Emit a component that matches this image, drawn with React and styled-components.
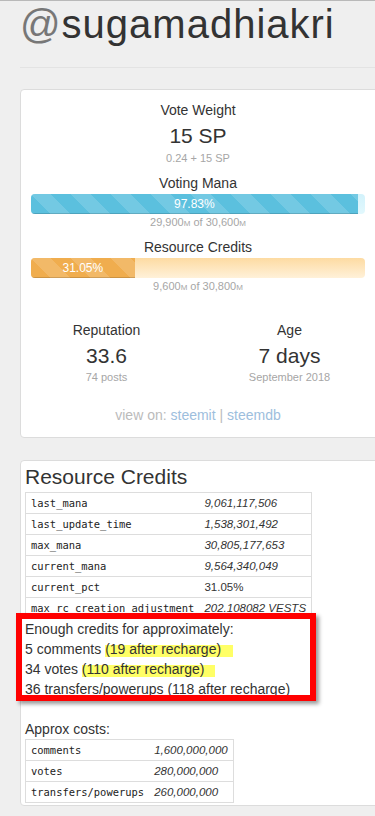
import React from 'react';
import styled, { createGlobalStyle } from 'styled-components';

const GlobalStyle = createGlobalStyle`
  html, body {
    margin: 0;
    padding: 0;
  }
  body {
    background: #efefef;
    font-family: 'Liberation Sans', Arial, sans-serif;
    font-size: 14px;
    color: #333;
    overflow: hidden;
  }
`;

const rcRows = [
  { key: 'last_mana', value: '9,061,117,506', italic: true },
  { key: 'last_update_time', value: '1,538,301,492', italic: true },
  { key: 'max_mana', value: '30,805,177,653', italic: true },
  { key: 'current_mana', value: '9,564,340,049', italic: true },
  { key: 'current_pct', value: '31.05%', italic: false },
  { key: 'max_rc_creation_adjustment', value: '202.108082 VESTS', italic: true },
];

const costRows = [
  { key: 'comments', value: '1,600,000,000', italic: true },
  { key: 'votes', value: '280,000,000', italic: true },
  { key: 'transfers/powerups', value: '260,000,000', italic: true },
];

const App = () => {
  return (
    <>
      <GlobalStyle />
      <Page>
        <Header>
          <Title><At>@</At>sugamadhiakri</Title>
        </Header>

        <Card $pad="10px 14px 12px 10px">
          <Label>Vote Weight</Label>
          <Value>15 SP</Value>
          <Sub $gap={2}>0.24 + 15 SP</Sub>

          <Group $gap={7}>
            <Label>Voting Mana</Label>
            <Track $track="linear-gradient(to bottom, #d2f2fb, #e2f8fd)">
              <Fill $color="#5bc0de" style={{ width: '97.83%' }}>97.83%</Fill>
            </Track>
            <Sub>29,900<Unit>M</Unit> of 30,600<Unit>M</Unit></Sub>
          </Group>

          <Group $gap={7}>
            <Label>Resource Credits</Label>
            <Track $track="linear-gradient(to bottom, #fddba2, #fff1d9)">
              <Fill $color="#f0ad4e" style={{ width: '31.05%' }}>31.05%</Fill>
            </Track>
            <Sub>9,600<Unit>M</Unit> of 30,800<Unit>M</Unit></Sub>
          </Group>

          <Columns>
            <div>
              <Label>Reputation</Label>
              <Value>33.6</Value>
              <Sub $gap={1}>74 posts</Sub>
            </div>
            <div>
              <Label>Age</Label>
              <Value>7 days</Value>
              <Sub $gap={1}>September 2018</Sub>
            </div>
          </Columns>

          <ViewOn>
            view on: <Link href="#">steemit</Link> | <Link href="#">steemdb</Link>
          </ViewOn>
        </Card>

        <Card $pad="4px 4px 2px">
          <Heading>Resource Credits</Heading>
          <Table>
            <tbody>
              {rcRows.map((r) => (
                <tr key={r.key}>
                  <KeyCell>{r.key}</KeyCell>
                  <ValueCell $italic={r.italic}>{r.value}</ValueCell>
                </tr>
              ))}
            </tbody>
          </Table>

          <Annotated>
            <Line>Enough credits for approximately:</Line>
            <Line>5 comments <Mark $extra={12}>(19 after recharge)</Mark></Line>
            <Line>34 votes <Mark $extra={10}>(110 after recharge)</Mark></Line>
            <Line>36 transfers/powerups (118 after recharge)</Line>
          </Annotated>

          <Approx>Approx costs:</Approx>
          <Table>
            <tbody>
              {costRows.map((r) => (
                <tr key={r.key}>
                  <KeyCell>{r.key}</KeyCell>
                  <ValueCell $italic={r.italic}>{r.value}</ValueCell>
                </tr>
              ))}
            </tbody>
          </Table>
        </Card>
      </Page>
    </>
  );
};

const Page = styled.div`
  border-top: 1px solid #b9b9b9;
  padding-left: 20px;
`;

const Header = styled.div`
  padding: 1px 0 21px;
  border-bottom: 1px solid #e3e3e3;
  margin-bottom: 21px;
`;

const Title = styled.h1`
  margin: 0;
  font-size: 40px;
  line-height: 44px;
  font-weight: normal;
  letter-spacing: 1px;
  color: #333;
  white-space: nowrap;
`;

const At = styled.span`
  color: #777;
`;

const Card = styled.div`
  width: 360px;
  box-sizing: border-box;
  background: #fff;
  border: 1px solid #dcdcdc;
  border-radius: 4px;
  padding: ${(p) => p.$pad};

  & + & {
    margin-top: 22px;
  }
`;

const Label = styled.div`
  line-height: 20px;
  text-align: center;
`;

const Value = styled.div`
  margin-top: 4px;
  font-size: 21px;
  line-height: 24px;
  text-align: center;
`;

const Sub = styled.div`
  margin-top: ${(p) => p.$gap || 0}px;
  font-size: 11px;
  line-height: 16px;
  color: #a6a6a6;
  text-align: center;
`;

const Unit = styled.span`
  font-size: 8px;
  line-height: 1;
`;

const Group = styled.div`
  margin-top: ${(p) => p.$gap}px;
`;

const Track = styled.div`
  margin-top: 1px;
  height: 20px;
  border-radius: 4px;
  overflow: hidden;
  background: ${(p) => p.$track};
`;

const Fill = styled.div`
  height: 100%;
  background-color: ${(p) => p.$color};
  background-image: linear-gradient(
    45deg,
    rgba(255, 255, 255, 0.15) 25%,
    transparent 25%,
    transparent 50%,
    rgba(255, 255, 255, 0.15) 50%,
    rgba(255, 255, 255, 0.15) 75%,
    transparent 75%,
    transparent
  );
  background-size: 40px 40px;
  box-shadow: inset 0 -1px 0 rgba(0, 0, 0, 0.15);
  color: #fff;
  font-size: 12px;
  line-height: 20px;
  text-align: center;
  white-space: nowrap;
`;

const Columns = styled.div`
  display: grid;
  grid-template-columns: 1fr 1fr;
  margin: 26px -16px 0;
`;

const ViewOn = styled.div`
  margin-top: 20px;
  line-height: 20px;
  text-align: center;
  color: #bbb;
`;

const Link = styled.a`
  color: #9dbedd;
  text-decoration: none;
`;

const Heading = styled.h3`
  margin: 0 0 3px;
  font-size: 21px;
  line-height: 24px;
  font-weight: normal;
  color: #333;
`;

const Table = styled.table`
  border-collapse: collapse;
  border: 1px solid #ddd;

  td {
    padding: 0 5px;
    line-height: 20px;
    border-top: 1px solid #ddd;
    white-space: nowrap;
    vertical-align: middle;
  }
`;

const KeyCell = styled.td`
  font-family: 'DejaVu Sans Mono', 'Liberation Mono', monospace;
  font-size: 10.45px;
  color: #222;
`;

const ValueCell = styled.td`
  font-size: 11.5px;
  font-style: ${(p) => (p.$italic ? 'italic' : 'normal')};
  color: #333;
`;

const Annotated = styled.div`
  position: relative;
  line-height: 20px;

  &::after {
    content: '';
    position: absolute;
    top: -6px;
    left: -9px;
    width: 300px;
    height: 88px;
    box-sizing: border-box;
    border: 6px solid #ff0000;
    box-shadow: 3px 3px 4px rgba(0, 0, 0, 0.4);
    pointer-events: none;
  }
`;

const Line = styled.div`
  white-space: nowrap;
`;

const Mark = styled.span`
  background: linear-gradient(#ffff66, #ffff66) 0 4px / 100% 14px no-repeat;
  padding-right: ${(p) => p.$extra}px;
`;

const Approx = styled.div`
  margin-top: 20px;
  line-height: 20px;
`;

export default App;
